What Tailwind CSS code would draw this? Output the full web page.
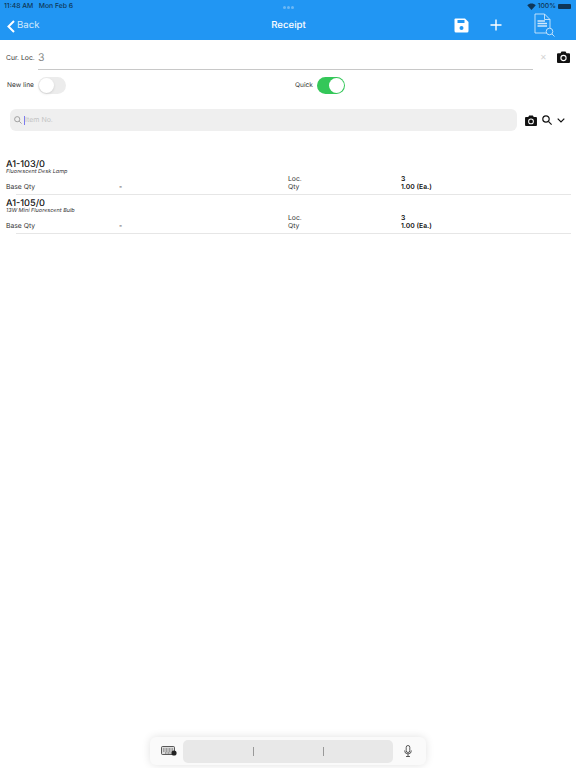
<!DOCTYPE html>
<html lang="en">
<head>
    <meta charset="UTF-8">
    <meta name="viewport" content="width=device-width, initial-scale=1.0">
    <title>Receipt</title>
    <script src="https://cdn.jsdelivr.net/npm/@tailwindcss/browser@4"></script>
</head>
<body class="bg-white text-[#222] font-['Inter',sans-serif] antialiased [text-rendering:geometricPrecision] w-[576px] h-[768px] overflow-hidden relative">
    <!-- header -->
    <div class="bg-[#2196f3] h-[40px] text-white relative">
        <div class="flex justify-between items-center h-[12px] pt-[1px] pl-[4px] pr-[5px] text-[6.8px] font-medium">
            <span class="text-[#0f3657]">11:48 AM&nbsp;&nbsp;&nbsp;Mon Feb 6</span>
            <div class="flex items-center gap-[2px] text-[#0f3657]">
                <svg width="9" height="7" viewBox="0 0 18 14" fill="#0f3657"><path d="M9 14 L0.5 4.5 C5 0 13 0 17.5 4.5 Z"/></svg>
                <span>100%</span>
                <div class="w-[13px] h-[5px] rounded-[1px] bg-[#0f3657]"></div>
            </div>
        </div>
        <div class="absolute left-[283px] top-[6px] flex gap-[1.5px]">
            <div class="w-[2.5px] h-[2.5px] rounded-full bg-[#6cb8f5]"></div>
            <div class="w-[2.5px] h-[2.5px] rounded-full bg-[#6cb8f5]"></div>
            <div class="w-[2.5px] h-[2.5px] rounded-full bg-[#6cb8f5]"></div>
        </div>
        <div class="flex items-center h-[28px] pl-[7px] relative">
            <svg width="8" height="13" viewBox="0 0 8 13" fill="none" stroke="white" stroke-width="2"><path d="M7 1 L1.5 6.5 L7 12"/></svg>
            <span class="ml-[2px] pt-[1px] text-[9.6px] text-[#d3eafc]">Back</span>
            <span class="absolute left-0 w-full text-center text-[9.6px] font-medium pl-[1px] pt-[1px]">Receipt</span>
            <div class="absolute left-[454px] top-[6px]">
                <svg width="15" height="15" viewBox="0 0 15 15"><path d="M1.5 0.5 H11 L14.5 4 V13 Q14.5 14.5 13 14.5 H2 Q0.5 14.5 0.5 13 V1.5 Q0.5 0.5 1.5 0.5 Z" fill="white"/><rect x="3.5" y="2" width="7" height="3" fill="#2196f3"/><circle cx="7.5" cy="10" r="2" fill="#2196f3"/></svg>
            </div>
            <div class="absolute left-[490px] top-[7px]">
                <svg width="12" height="12" viewBox="0 0 12 12" stroke="white" stroke-width="1.4"><path d="M6 0.5 V11.5 M0.5 6 H11.5"/></svg>
            </div>
            <div class="absolute left-[534px] top-[1px]">
                <svg width="21" height="25" viewBox="0 0 21 25" fill="none" stroke="#cfe8fc" stroke-width="0.9"><path d="M1 1 H10.5 L16 6.5 V20 H1 Z"/><path d="M10.5 1 V6.5 H16"/><path d="M3.5 8 H11 M3.5 10.5 H13 M3.5 13 H13" stroke-width="1.6"/><circle cx="15.5" cy="18.5" r="3.3" fill="#2196f3"/><path d="M18 21 L20.5 23.5"/></svg>
            </div>
        </div>
    </div>

    <!-- current location -->
    <div class="flex items-start h-[30px] relative">
        <span class="w-[38px] pl-[6px] pt-[14px] text-[6.8px] whitespace-nowrap leading-[8px] text-[#333]">Cur. Loc.</span>
        <div class="w-[495px] h-[30px] border-b border-[#c8c8c8] pt-[11px] text-[10.5px] leading-[13px] text-[#888]">3</div>
        <span class="ml-[7px] mt-[13px] text-[#d4d4d4] text-[8px] leading-[9px]">✕</span>
        <svg class="absolute left-[557px] top-[11px]" width="13" height="12" viewBox="0 0 13 12"><path d="M1 2.2 H3.5 L4.5 0.5 H8.5 L9.5 2.2 H12 Q13 2.2 13 3.2 V11 Q13 12 12 12 H1 Q0 12 0 11 V3.2 Q0 2.2 1 2.2 Z" fill="#111"/><circle cx="6.5" cy="7" r="2.6" fill="none" stroke="white" stroke-width="1.1"/></svg>
    </div>

    <!-- toggles -->
    <div class="flex items-center h-[17px] mt-[7px] text-[6.6px] text-[#333]">
        <span class="w-[38px] pl-[7px] whitespace-nowrap">New line</span>
        <div class="w-[28px] h-[17px] rounded-full bg-[#ececec] flex items-center p-[1px]">
            <div class="w-[15px] h-[15px] rounded-full bg-white shadow"></div>
        </div>
        <span class="ml-[229px] w-[22px] text-[#333]">Quick</span>
        <div class="w-[28px] h-[17px] rounded-full bg-[#34c759] flex items-center justify-end p-[1px]">
            <div class="w-[15px] h-[15px] rounded-full bg-white"></div>
        </div>
    </div>

    <!-- search -->
    <div class="flex items-center h-[22px] mt-[15px] pl-[10px]">
        <div class="w-[507px] h-[22px] rounded-[6px] bg-[#efefef] flex items-center pl-[4px]">
            <svg width="8" height="8" viewBox="0 0 8 8" fill="none" stroke="#999" stroke-width="0.9"><circle cx="3.2" cy="3.2" r="2.6"/><path d="M5.2 5.2 L7.6 7.6"/></svg>
            <div class="w-[1px] h-[9px] bg-[#7b7bf0] ml-[2px]"></div>
            <span class="text-[7px] text-[#c4c4c4]">Item No.</span>
        </div>
        <svg class="ml-[8px]" width="12" height="11" viewBox="0 0 13 12"><path d="M1 2.2 H3.5 L4.5 0.5 H8.5 L9.5 2.2 H12 Q13 2.2 13 3.2 V11 Q13 12 12 12 H1 Q0 12 0 11 V3.2 Q0 2.2 1 2.2 Z" fill="#111"/><circle cx="6.5" cy="7" r="2.6" fill="none" stroke="white" stroke-width="1.1"/></svg>
        <svg class="ml-[5px]" width="10" height="10" viewBox="0 0 10 10" fill="none" stroke="#111" stroke-width="1.2"><circle cx="4" cy="4" r="3.2"/><path d="M6.4 6.4 L9.6 9.6"/></svg>
        <svg class="ml-[5px]" width="8" height="5" viewBox="0 0 8 5" fill="none" stroke="#111" stroke-width="1.2"><path d="M0.7 0.7 L4 4 L7.3 0.7"/></svg>
    </div>

    <!-- items -->
    <div id="items" class="mt-[25px]">
        <div class="h-[39px] relative border-b border-[#e6e6e6] ml-[16px] mr-[5px]">
            <div class="absolute left-[-10px] top-[3px] text-[9.2px] leading-[11px] font-medium text-[#111]">A1-103/0</div>
            <div class="absolute left-[-10px] top-[13px] text-[5.5px] leading-[7px] italic text-[#333]">Fluorescent Desk Lamp</div>
            <div class="absolute left-[-10px] top-[19px] w-[560px] grid grid-cols-[113px_169px_113px_1fr] text-[6.8px] leading-[8px] text-[#333]">
                <span></span><span></span><span>Loc.</span><span class="font-semibold text-[#111]">3</span>
                <span>Base Qty</span><span class="font-semibold">-</span><span>Qty</span><span class="font-semibold text-[#111]">1.00 (Ea.)</span>
            </div>
        </div>
        <div class="h-[39px] relative border-b border-[#e6e6e6] ml-[16px] mr-[5px]">
            <div class="absolute left-[-10px] top-[3px] text-[9.2px] leading-[11px] font-medium text-[#111]">A1-105/0</div>
            <div class="absolute left-[-10px] top-[13px] text-[5.5px] leading-[7px] italic text-[#333]">13W Mini Fluorescent Bulb</div>
            <div class="absolute left-[-10px] top-[19px] w-[560px] grid grid-cols-[113px_169px_113px_1fr] text-[6.8px] leading-[8px] text-[#333]">
                <span></span><span></span><span>Loc.</span><span class="font-semibold text-[#111]">3</span>
                <span>Base Qty</span><span class="font-semibold">-</span><span>Qty</span><span class="font-semibold text-[#111]">1.00 (Ea.)</span>
            </div>
        </div>
    </div>

    <!-- keyboard shortcut bar -->
    <div class="absolute left-[150px] top-[737px] w-[276px] h-[28px] rounded-[6px] bg-[#fafafa] shadow-[0_0_8px_rgba(0,0,0,0.12)] flex items-center">
        <svg class="ml-[11px]" width="16" height="10" viewBox="0 0 16 10"><rect x="0.5" y="0.5" width="13" height="8" rx="1" fill="#ddd" stroke="#333" stroke-width="0.8"/><path d="M2 3 H12 M2 5 H12 M4 7 H10" stroke="#444" stroke-width="0.8" stroke-dasharray="1 0.5"/><circle cx="13" cy="7" r="2.6" fill="#222"/></svg>
        <div class="ml-[6px] w-[210px] h-[23px] rounded-[5px] bg-[#e8e8e8] flex items-center justify-center gap-[69px]">
            <div class="w-[1px] h-[9px] bg-[#999]"></div>
            <div class="w-[1px] h-[9px] bg-[#999]"></div>
        </div>
        <svg class="ml-[11px]" width="8" height="12" viewBox="0 0 8 12" fill="none" stroke="#333" stroke-width="0.8"><rect x="2.2" y="0.5" width="3.6" height="7" rx="1.8"/><path d="M0.6 5.5 A3.4 3.4 0 0 0 7.4 5.5 M4 9 V11.5 M2 11.5 H6"/></svg>
    </div>
</body>
</html>
